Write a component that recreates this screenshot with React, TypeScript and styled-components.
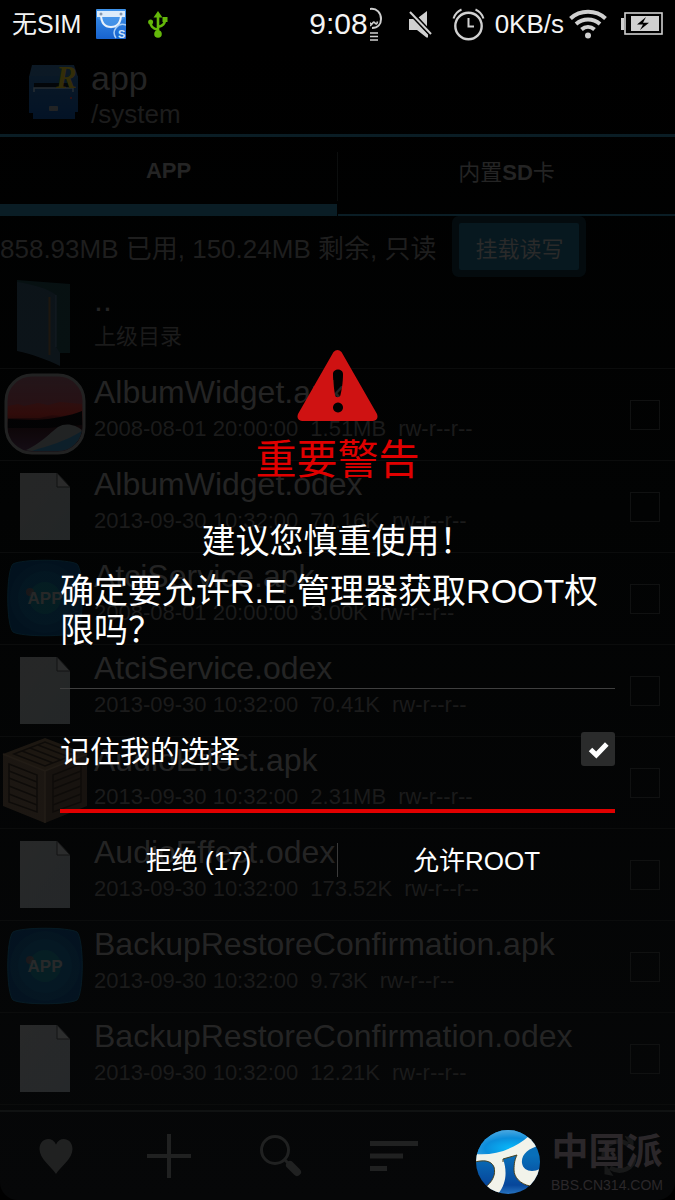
import React, { useState } from "react";
import styled, { createGlobalStyle } from "styled-components";

const fontStack = '"Liberation Sans", "Noto Sans CJK SC", sans-serif';

const GlobalStyle = createGlobalStyle`
  *, *::before, *::after { box-sizing: border-box; }
  body { margin: 0; background: #000; font-family: ${fontStack}; }
  button, input { font-family: inherit; }
`;

const Screen = styled.div`
  position: relative;
  min-height: 100vh;
  display: flex;
  flex-direction: column;
  background: #000;
  overflow: hidden;
`;

/* ---------- status bar ---------- */

const StatusBar = styled.header`
  display: flex;
  align-items: center;
  justify-content: space-between;
  height: 48px;
  padding: 0 12px;
  color: #f4f4f4;
  white-space: nowrap;
`;

const StatusGroup = styled.div<{ $gap: number }>`
  display: flex;
  align-items: center;
  gap: ${(p) => p.$gap}px;
`;

const StatusText = styled.span<{ $size: number }>`
  font-size: ${(p) => p.$size}px;
  line-height: 36px;
`;

const Icon = styled.svg`
  display: block;
  flex: none;
`;

/* ---------- file manager ---------- */

const Manager = styled.div`
  flex: 1;
  display: flex;
  flex-direction: column;
  background: linear-gradient(#000, #020303 40%, #060708);
  border-radius: 0 0 18px 18px;
`;

const TitleBar = styled.div`
  display: flex;
  height: 89px;
  padding: 11px 28px 0;
  gap: 11px;
  border-bottom: 3px solid #0a1d25;
`;

const TitleText = styled.div`
  display: flex;
  flex-direction: column;
`;

const Title = styled.h1`
  margin: 0;
  font-size: 34px;
  line-height: 38px;
  font-weight: 400;
  color: #242424;
`;

const Path = styled.span`
  font-size: 26px;
  line-height: 34px;
  color: #1c1c1c;
`;

const Tabs = styled.nav`
  display: grid;
  grid-template-columns: 1fr 1px 1fr;
  column-gap: 0;
  height: 79px;
`;

const Tab = styled.button<{ $active?: boolean }>`
  border: 0;
  padding: 0 0 ${(p) => (p.$active ? 0 : 12)}px;
  border-bottom: ${(p) => (p.$active ? 12 : 2)}px solid #0a1d25;
  background: none;
  color: #242424;
  font-size: 22px;
  font-weight: 700;
`;

const TabCjk = styled.span`
  font-weight: 400;
`;

const TabSeparator = styled.div`
  margin: 15px 0;
  background: #0c0e0e;
`;

const MountBar = styled.div`
  display: flex;
  align-items: center;
  gap: 23px;
  height: 61px;
  color: #1e1e1e;
  font-size: 26px;
  white-space: nowrap;
`;

const MountButton = styled.button`
  width: 120px;
  height: 47px;
  border: 0;
  padding: 0;
  border-radius: 2px;
  background: #07181f;
  box-shadow: 0 0 0 7px #040b0e;
  color: #2a2a2a;
  font-size: 22px;
`;

const List = styled.ul`
  margin: 0;
  padding: 0;
  list-style: none;
`;

const Row = styled.li`
  display: flex;
  height: 92px;
  padding-right: 15px;
  border-bottom: 1px solid #0b0c0c;
`;

const RowIcon = styled.div`
  flex: none;
  width: 94px;
  opacity: 0.27;
`;

const RowText = styled.div`
  flex: 1;
  min-width: 0;
  padding-top: 5px;
  white-space: nowrap;
`;

const Name = styled.div`
  font-size: 32px;
  line-height: 36px;
  color: #242424;
`;

const Meta = styled.div`
  display: flex;
  gap: 12px;
  margin-top: 6px;
  font-size: 22px;
  line-height: 26px;
  color: #1b1b1b;
`;

const RowCheck = styled.input`
  appearance: none;
  align-self: center;
  flex: none;
  width: 30px;
  height: 30px;
  margin: 0;
  border: 1px solid #101111;
`;

const Toolbar = styled.footer`
  flex: 1;
  display: grid;
  grid-template-columns: repeat(6, 1fr);
  margin-top: 5px;
  min-height: 90px;
  border-top: 2px solid #101212;
`;

const Tool = styled.button<{ $column: number }>`
  grid-column: ${(p) => p.$column};
  display: flex;
  align-items: center;
  justify-content: center;
  border: 0;
  padding: 0;
  background: none;
  color: #202121;
`;

/* ---------- permission dialog ---------- */

const Overlay = styled.div`
  position: absolute;
  inset: 0;
  padding: 350px 60px 0;
`;

const Dialog = styled.section`
  display: flex;
  flex-direction: column;
  color: #fff;
`;

const WarningMark = styled.div`
  display: flex;
  justify-content: center;
`;

const DialogTitle = styled.h2`
  margin: 14px 0 36px;
  font-size: 41px;
  line-height: 50px;
  font-weight: 400;
  text-align: center;
  color: #e00000;
`;

const Advice = styled.p`
  margin: 0 0 11px;
  font-size: 34px;
  line-height: 40px;
  text-align: center;
`;

const Question = styled.p`
  margin: 0 0 38px;
  font-size: 34px;
  line-height: 39px;
`;

const Remember = styled.label`
  display: flex;
  align-items: center;
  justify-content: space-between;
  height: 121px;
  border-top: 1px solid #3f3f3f;
  font-size: 30px;
`;

const CheckWrap = styled.span`
  display: grid;
  width: 34px;
  height: 34px;
  > * { grid-area: 1 / 1; }
  svg { pointer-events: none; }
`;

const RememberCheck = styled.input`
  appearance: none;
  width: 34px;
  height: 34px;
  margin: 0;
  border-radius: 3px;
  background: #2a2b2b;
`;

const Actions = styled.div`
  display: grid;
  grid-template-columns: 1fr 1px 1fr;
  align-items: center;
  height: 98px;
  border-top: 4px solid #e00000;
`;

const Action = styled.button`
  height: 94px;
  border: 0;
  padding: 0 0 4px;
  background: none;
  color: #fff;
  font-size: 26px;
`;

const ActionSeparator = styled.div`
  height: 34px;
  background: #3a3a3a;
`;

/* ---------- forum watermark ---------- */

const Watermark = styled.div`
  position: absolute;
  right: 12px;
  bottom: 5px;
  display: flex;
  align-items: center;
  gap: 10px;
  color: #2b272a;
`;

const WatermarkText = styled.div`
  display: flex;
  flex-direction: column;
  align-items: center;
`;

const ForumName = styled.span`
  font-size: 37px;
  line-height: 46px;
  font-weight: 700;
`;

const ForumUrl = styled.span`
  font-size: 14px;
  line-height: 18px;
`;

/* ---------- drawings ---------- */

const BagIcon = () => (
  <Icon width="30" height="30" viewBox="0 0 30 30">
    <defs>
      <linearGradient id="bag" x1="0" y1="0" x2="0" y2="1">
        <stop offset="0" stopColor="#3f93ea" />
        <stop offset="1" stopColor="#1763cf" />
      </linearGradient>
    </defs>
    <rect width="30" height="30" rx="1" fill="url(#bag)" />
    <path d="M1 2h28v6H1z" fill="#dcebfa" />
    <path d="M0 8h30L15 20z" fill="#5aa6f2" opacity=".5" />
    <path d="M5 5c0 9 4 13 10 13s10-4 10-13" fill="none" stroke="#e8f1fb" strokeWidth="2" />
    <circle cx="5" cy="5" r="1.500" fill="#8396ad" />
    <circle cx="25" cy="5" r="1.500" fill="#8396ad" />
    <path d="M30 16a8.500 8.500 0 0 0-10 13" fill="none" stroke="#a9cff6" strokeWidth="1.500" />
    <text x="22" y="29" fontFamily="Liberation Sans, sans-serif" fontWeight="700" fontSize="11" fill="#cfe4fa">S</text>
  </Icon>
);

const UsbIcon = () => (
  <Icon width="20" height="27" viewBox="0 0 20 27" fill="none" stroke="#64b80a" strokeWidth="2.600">
    <path d="M10 4v18M10 19c-6-2-7.500-4-7.500-8M10 16c5-1.500 7-3 7-8" />
    <path d="M10 0l4.500 6.500h-9z" fill="#64b80a" stroke="none" />
    <circle cx="10" cy="23" r="3.800" fill="#64b80a" stroke="none" />
    <circle cx="2.600" cy="11" r="2.500" fill="#64b80a" stroke="none" />
    <path d="M14.500 6h5v5h-5z" fill="#64b80a" stroke="none" />
  </Icon>
);

const FaceIcon = () => (
  <Icon width="13" height="34" viewBox="0 0 13 34" fill="none" stroke="#cfcfcf" strokeWidth="2">
    <path d="M0 2c7-1 11 4 11 10 0 5-3 9-9 9" />
    <path d="M0 15.500c2 4 3-2 4.500 0s2.500 2 3-1M0 19l3-3" strokeWidth="1.600" />
    <path d="M0 26h8M0 29.500h8M0 33h8" strokeWidth="1.600" />
  </Icon>
);

const MuteIcon = () => (
  <Icon width="24" height="28" viewBox="0 0 24 28" fill="#d0d0d0">
    <path d="M1 9h5l14 15v3.500h-1.500L9 20H1z" />
    <path d="M10.500 7.500L19 1v16z" />
    <path d="M2 2l21 22" stroke="#000" strokeWidth="5" />
    <path d="M2 2l21 22" stroke="#d0d0d0" strokeWidth="2" />
  </Icon>
);

const AlarmIcon = () => (
  <Icon width="33" height="33" viewBox="0 0 33 33" fill="none" stroke="#d0d0d0" strokeWidth="2.400">
    <circle cx="16.500" cy="18" r="13.200" />
    <path d="M16.500 10v8.500H22" strokeWidth="2" />
    <path d="M1.500 10.500C3 6 5 3.500 9.500 1.500M31.500 10.500C30 6 28 3.500 23.500 1.500" strokeWidth="2" />
  </Icon>
);

const WifiIcon = () => (
  <Icon width="38" height="30" viewBox="0 0 38 30" fill="none" stroke="#d0d0d0" strokeWidth="4">
    <path d="M1.500 9.500C11 .5 27 .5 36.500 9.500" />
    <path d="M7 15c7-6 17-6 24 0" />
    <path d="M12.500 20.500c4-3.500 9-3.500 13 0" />
    <circle cx="19" cy="26.500" r="3" fill="#d0d0d0" stroke="none" />
  </Icon>
);

const BatteryIcon = () => (
  <Icon width="42" height="24" viewBox="0 0 42 24">
    <path d="M0 6h3v12H0z" fill="#d0d0d0" />
    <rect x="4" y="1" width="37" height="21" fill="none" stroke="#d0d0d0" strokeWidth="1.600" />
    <path d="M10 4h28v15H10z" fill="#d0d0d0" />
    <path d="M25 5l-9 7.500h6L19 18l9-7.200h-6z" fill="#000" />
  </Icon>
);

const DrawerIcon = () => (
  <Icon width="52" height="64" viewBox="0 0 52 64" opacity=".3">
    <defs>
      <linearGradient id="drawer" x1="0" y1="0" x2="0" y2="1">
        <stop offset="0" stopColor="#20507f" />
        <stop offset="1" stopColor="#0b3e7c" />
      </linearGradient>
    </defs>
    <path d="M4 6h42l4 12H1z" fill="#28547c" />
    <path d="M1 17h49v36h-3v7H5v-6H1z" fill="url(#drawer)" />
    <path d="M6 24h38v5H6z" fill="#0a1420" />
    <path d="M6 33v-4h39v4" fill="none" stroke="#7f93a5" strokeWidth="1.500" />
    <rect x="21" y="47" width="9" height="5" rx="1" fill="#707478" />
    <circle cx="43" cy="39" r="1" fill="#c33" />
    <text x="28" y="29" fontFamily="Liberation Serif, serif" fontStyle="italic" fontWeight="700" fontSize="31" fill="#a8941c">R</text>
  </Icon>
);

const FolderIcon = () => (
  <Icon width="90" height="91" viewBox="0 0 90 91">
    <path d="M17 3l53 4v69H58L17 73z" fill="#17393f" />
    <path d="M17 5c14 2 30 6 39 13v52l4 6v13C48 83 32 77 17 74z" fill="#2c4458" />
    <path d="M49.500 20v58" stroke="#6a5232" strokeWidth="2" />
    <path d="M56 18v52" stroke="#46637c" strokeWidth="1" />
  </Icon>
);

const FileIcon = () => (
  <Icon width="90" height="91" viewBox="0 0 90 91">
    <defs>
      <linearGradient id="sheet" x1="0" y1="0" x2="1" y2="1">
        <stop offset="0" stopColor="#868686" />
        <stop offset="1" stopColor="#7c8387" />
      </linearGradient>
    </defs>
    <path d="M20 12h37l13 14v53H20z" fill="url(#sheet)" />
    <path d="M57 12l13 14H57z" fill="#959595" stroke="#3a3a3a" strokeWidth="1" />
  </Icon>
);

const PhotoIcon = () => (
  <Icon width="90" height="91" viewBox="0 0 90 91">
    <defs>
      <linearGradient id="sky" x1="0" y1="0" x2="0" y2="1">
        <stop offset="0" stopColor="#7c4a58" />
        <stop offset=".38" stopColor="#8a3a48" />
        <stop offset=".5" stopColor="#a02020" />
        <stop offset=".62" stopColor="#2a0d10" />
        <stop offset="1" stopColor="#4a2a4a" />
      </linearGradient>
      <clipPath id="photo"><rect x="8" y="8" width="74" height="74" rx="24" /></clipPath>
    </defs>
    <rect x="6" y="6" width="78" height="78" rx="26" fill="url(#sky)" stroke="#787878" strokeWidth="3" />
    <g clipPath="url(#photo)">
      <path d="M8 37l10-2 6 2 14-3 10 2 12-3 22 2v8l-20 4-10-1-12 3H8z" fill="#b82a22" opacity=".6" />
      <path d="M8 50l28 1c16-1 34-4 46-9v14l-34 3H8z" fill="#080508" />
      <path d="M24 82c16-7 26-18 34-24 8-5 18-2 24 3v21z" fill="#777b7e" />
      <path d="M32 82c18-6 32-9 50-20v20z" fill="#2d6d92" />
    </g>
  </Icon>
);

const ApkIcon = () => (
  <Icon width="90" height="91" viewBox="0 0 90 91">
    <path d="M13 11C22 6 68 6 77 11c7 7 7 61 0 68-9 5-55 5-64 0-7-7-7-61 0-68z" fill="#023866" stroke="#0c5476" strokeWidth="1" />
    <circle cx="45" cy="45" r="35" fill="#06416c" />
    <circle cx="45" cy="45" r="27" fill="#084b72" />
    <circle cx="45" cy="45" r="16" fill="#0c6173" />
    <circle cx="30" cy="39" r="4" fill="#8b4b40" opacity=".6" />
    <text x="45" y="51" textAnchor="middle" fontFamily="Liberation Sans, sans-serif" fontWeight="700" fontSize="17" fill="#87898a">APP</text>
  </Icon>
);

const CrateIcon = () => (
  <Icon width="90" height="91" viewBox="0 0 90 91">
    <path d="M45 1l42 16-42 17L3 17z" fill="#604a34" />
    <path d="M3 17l42 17v52L3 69z" fill="#5e4936" />
    <path d="M87 17L45 34v52l42-17z" fill="#4d3a2a" />
    <g fill="none" stroke="#2a1e14" strokeWidth="1.500">
      <path d="M9 27l28 11v37L9 65zM81 27L53 38v37l28-10z" />
      <path d="M9 34l28 11M9 41l28 11M9 49l28 11M9 57l28 11M81 34L53 45M81 41L53 52M81 49L53 60M81 57L53 68" />
      <path d="M14 17L45 5l31 12-31 12zM22 14l31 12M30 11l31 12M38 8l31 12" />
    </g>
    <path d="M3 17l42 17 42-17M45 34v52" fill="none" stroke="#745c44" strokeWidth="1.500" />
  </Icon>
);

const WarningIcon = () => (
  <Icon width="81" height="71" viewBox="0 0 81 71" fill="#cf1212">
    <path
      fillRule="evenodd"
      d="M36.500 2q4-4 8 0L80 64q2 6-4 7H5q-6-1-4-7zM36 24c0 9 1.500 17 2 21 .4 3 5 3 5.500 0C44.500 41 46 33 46 24c0-6-10-6-10 0zM41 52.500a5 5 0 1 0 .01 0z"
    />
  </Icon>
);

const TickIcon = () => (
  <Icon width="34" height="34" viewBox="0 0 34 34">
    <path d="M9.500 17.500l5.800 5.500 10.500-11" fill="none" stroke="#fff" strokeWidth="5" />
  </Icon>
);

const HeartIcon = () => (
  <Icon width="34" height="36" viewBox="0 0 34 36" fill="currentColor">
    <path d="M17 36C12 28 .5 21 .5 11 .5 0 13-2.500 17 6.500 21-2.500 33.500 0 33.500 11 33.500 21 22 28 17 36z" />
  </Icon>
);

const PlusIcon = () => (
  <Icon width="44" height="44" viewBox="0 0 44 44" stroke="currentColor" strokeWidth="4">
    <path d="M22 0v44M0 22h44" />
  </Icon>
);

const SearchIcon = () => (
  <Icon width="42" height="42" viewBox="0 0 42 42" fill="none" stroke="currentColor">
    <circle cx="15" cy="15" r="13.500" strokeWidth="3" />
    <path d="M24.500 24.500l5 5" strokeWidth="3" />
    <path d="M30 30l7 7" strokeWidth="8" strokeLinecap="round" />
  </Icon>
);

const SortIcon = () => (
  <Icon width="48" height="30" viewBox="0 0 48 30" fill="currentColor">
    <path d="M0 0h48v5H0zM0 12.500h33v5H0zM0 25h17v5H0z" />
  </Icon>
);

const RefreshIcon = () => (
  <Icon width="40" height="44" viewBox="0 0 44 44" fill="none" stroke="currentColor" strokeWidth="5" opacity=".7">
    <path d="M5 22C5 8 20 2 32 9M39 22c0 14-15 20-27 13" />
    <path d="M28 0l10 2v13zM16 44L6 42V29z" fill="currentColor" stroke="none" />
  </Icon>
);

const PiLogo = () => (
  <Icon width="66" height="66" viewBox="0 0 66 66">
    <defs>
      <radialGradient id="piTop" cx=".55" cy=".75" r=".8">
        <stop offset="0" stopColor="#08b9fa" />
        <stop offset=".5" stopColor="#0b8ddb" />
        <stop offset="1" stopColor="#5eb0e2" />
      </radialGradient>
      <linearGradient id="piBase" x1="0" y1="0" x2="0" y2="1">
        <stop offset=".4" stopColor="#086fb9" />
        <stop offset=".85" stopColor="#07469a" />
        <stop offset="1" stopColor="#2a78c4" />
      </linearGradient>
      <clipPath id="piDisc"><circle cx="33" cy="33" r="32" /></clipPath>
    </defs>
    <g clipPath="url(#piDisc)">
      <rect width="66" height="66" fill="url(#piBase)" />
      <path d="M0 0h66v8H54C40 21 20 28 0 25z" fill="url(#piTop)" />
      <path
        d="M0 25C20 27 39 20 54 7l12 9c-12 3-20 9-19 18 1 8 10 10 18 6v12l-10 5C45 55 39 48 39 41c0-7 1-11 3-15l-14 4c4 11 4 24-5 35L9 59c9-6 12-14 10-21C16 31 8 31 0 33z"
        fill="#f2f3ea"
      />
      <path d="M9 59c9-6 12-14 10-21C16 31 8 31 0 33M28 33v-3l14-4c-2 4-3 8-3 15 0 7 6 14 16 16" fill="none" stroke="#4a4320" strokeWidth="1" />
    </g>
  </Icon>
);

/* ---------- data ---------- */

type Kind = "photo" | "file" | "apk" | "crate";

const icons: Record<Kind, () => React.JSX.Element> = {
  photo: PhotoIcon,
  file: FileIcon,
  apk: ApkIcon,
  crate: CrateIcon,
};

const files: { name: string; date: string; size: string; kind: Kind }[] = [
  { name: "AlbumWidget.apk", date: "2008-08-01 20:00:00", size: "1.51MB", kind: "photo" },
  { name: "AlbumWidget.odex", date: "2013-09-30 10:32:00", size: "70.16K", kind: "file" },
  { name: "AtciService.apk", date: "2008-08-01 20:00:00", size: "3.00K", kind: "apk" },
  { name: "AtciService.odex", date: "2013-09-30 10:32:00", size: "70.41K", kind: "file" },
  { name: "AudioEffect.apk", date: "2013-09-30 10:32:00", size: "2.31MB", kind: "crate" },
  { name: "AudioEffect.odex", date: "2013-09-30 10:32:00", size: "173.52K", kind: "file" },
  { name: "BackupRestoreConfirmation.apk", date: "2013-09-30 10:32:00", size: "9.73K", kind: "apk" },
  { name: "BackupRestoreConfirmation.odex", date: "2013-09-30 10:32:00", size: "12.21K", kind: "file" },
];

export default function App() {
  const [remember, setRemember] = useState(true);

  return (
    <Screen>
      <GlobalStyle />
      <StatusBar>
        <StatusGroup $gap={22}>
          <StatusGroup $gap={15}>
            <StatusText $size={25}>无SIM</StatusText>
            <BagIcon />
          </StatusGroup>
          <UsbIcon />
        </StatusGroup>
        <StatusGroup $gap={14}>
          <StatusGroup $gap={25}>
            <StatusGroup $gap={2}>
              <StatusText $size={30}>9:08</StatusText>
              <FaceIcon />
            </StatusGroup>
            <StatusGroup $gap={20}>
              <MuteIcon />
              <StatusGroup $gap={10}>
                <AlarmIcon />
                <StatusGroup $gap={5}>
                  <StatusText $size={26}>0KB/s</StatusText>
                  <WifiIcon />
                </StatusGroup>
              </StatusGroup>
            </StatusGroup>
          </StatusGroup>
          <BatteryIcon />
        </StatusGroup>
      </StatusBar>

      <Manager>
        <TitleBar>
          <DrawerIcon />
          <TitleText>
            <Title>app</Title>
            <Path>/system</Path>
          </TitleText>
        </TitleBar>
        <Tabs>
          <Tab $active>APP</Tab>
          <TabSeparator />
          <Tab>
            <TabCjk>内置</TabCjk>SD<TabCjk>卡</TabCjk>
          </Tab>
        </Tabs>
        <MountBar>
          <span>858.93MB 已用, 150.24MB 剩余, 只读</span>
          <MountButton>挂载读写</MountButton>
        </MountBar>
        <List>
          <Row>
            <RowIcon><FolderIcon /></RowIcon>
            <RowText>
              <Name>..</Name>
              <Meta>上级目录</Meta>
            </RowText>
          </Row>
          {files.map((file) => {
            const FileKindIcon = icons[file.kind];
            return (
              <Row key={file.name}>
                <RowIcon><FileKindIcon /></RowIcon>
                <RowText>
                  <Name>{file.name}</Name>
                  <Meta>
                    <span>{file.date}</span>
                    <span>{file.size}</span>
                    <span>rw-r--r--</span>
                  </Meta>
                </RowText>
                <RowCheck type="checkbox" aria-label={file.name} />
              </Row>
            );
          })}
        </List>
        <Toolbar>
          <Tool $column={1} aria-label="收藏"><HeartIcon /></Tool>
          <Tool $column={2} aria-label="新建"><PlusIcon /></Tool>
          <Tool $column={3} aria-label="搜索"><SearchIcon /></Tool>
          <Tool $column={4} aria-label="排序"><SortIcon /></Tool>
          <Tool $column={6} aria-label="刷新"><RefreshIcon /></Tool>
        </Toolbar>
      </Manager>

      <Overlay>
        <Dialog role="dialog" aria-labelledby="dialog-title">
          <WarningMark><WarningIcon /></WarningMark>
          <DialogTitle id="dialog-title">重要警告</DialogTitle>
          <Advice>建议您慎重使用！</Advice>
          <Question>确定要允许R.E.管理器获取ROOT权限吗？</Question>
          <Remember>
            记住我的选择
            <CheckWrap>
              <RememberCheck
                type="checkbox"
                checked={remember}
                onChange={(e) => setRemember(e.target.checked)}
              />
              {remember && <TickIcon />}
            </CheckWrap>
          </Remember>
          <Actions>
            <Action>拒绝 (17)</Action>
            <ActionSeparator />
            <Action>允许ROOT</Action>
          </Actions>
        </Dialog>
      </Overlay>

      <Watermark>
        <PiLogo />
        <WatermarkText>
          <ForumName>中国派</ForumName>
          <ForumUrl>BBS.CN314.COM</ForumUrl>
        </WatermarkText>
      </Watermark>
    </Screen>
  );
}
